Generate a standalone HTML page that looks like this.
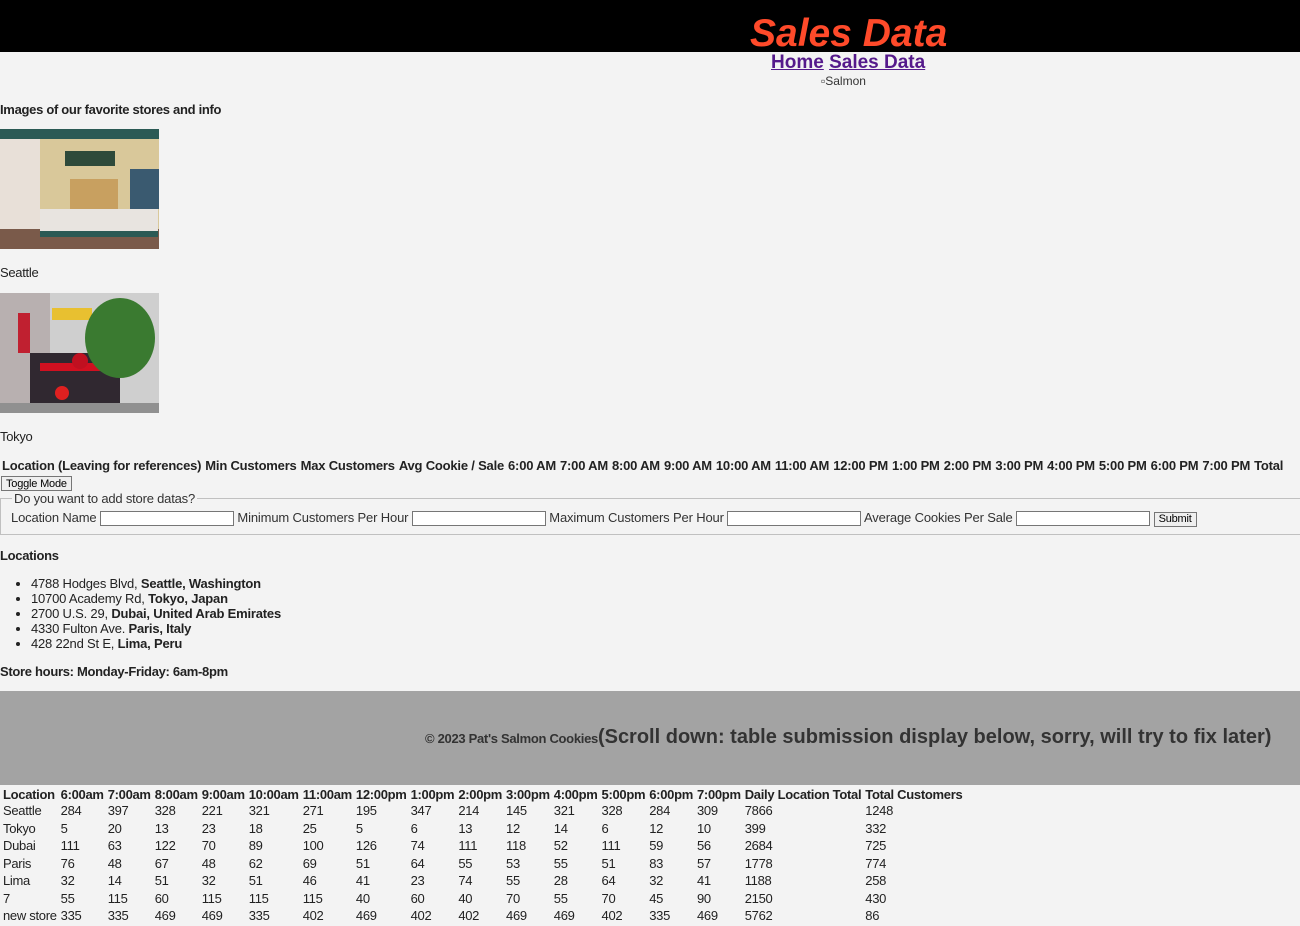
<!DOCTYPE html>
<html><head><meta charset="utf-8"><style>
body{margin:0;background:#f3f3f3;font-family:"Liberation Sans",Arial,sans-serif;font-size:13px;letter-spacing:-0.3px;color:#222;width:1300px;height:926px;position:relative;overflow:hidden}
.a{position:absolute}
header{position:absolute;left:0;top:0;width:1300px;height:52px;background:#000}
h1{position:absolute;left:750px;top:12px;margin:0;font-size:39px;letter-spacing:0;font-style:italic;font-weight:bold;color:#ff4a2a;line-height:44px}
table{border-collapse:separate;border-spacing:2px 0;font-size:13px}
th,td{padding:0 1px;text-align:left;white-space:nowrap}
td{height:17.5px}
.foot{left:0;top:691px;width:1300px;height:94px;background:#a3a3a3}
input{width:130px;height:11px;border:1px solid #767676;padding:1px;vertical-align:middle;background:#fff}
button{font-size:11px;font-family:inherit;padding:0 4px;border:1px solid #767676;background:#efefef;height:15px;line-height:12px;letter-spacing:-0.2px}
ul{margin:0;padding-left:31px}
</style></head><body>
<header><h1>Sales Data</h1></header>
<div class="a" style="left:771px;top:52px;font-size:19px;font-weight:bold;letter-spacing:0"><a href="#" style="color:#551a8b">Home</a> <a href="#" style="color:#551a8b">Sales Data</a></div>
<div class="a" style="left:821px;top:74px;font-size:12px;color:#333;letter-spacing:0">▫Salmon</div>
<div class="a" style="left:0;top:102px;font-weight:bold">Images of our favorite stores and info</div>
<svg class="a" style="left:0;top:129px" width="159" height="120"><rect width="159" height="120" fill="#d9c89a"/><rect width="159" height="10" fill="#2b5a55"/><rect x="0" y="10" width="40" height="100" fill="#e8e0d8"/><rect x="65" y="22" width="50" height="15" fill="#2e4a3a"/><rect x="70" y="50" width="48" height="40" fill="#c8a060"/><rect x="0" y="100" width="159" height="20" fill="#7a5a4a"/><rect x="40" y="80" width="118" height="25" fill="#e8e4e0"/><rect x="40" y="102" width="118" height="6" fill="#2b5a55"/><rect x="130" y="40" width="29" height="40" fill="#3a5a70"/></svg>
<div class="a" style="left:0;top:265px">Seattle</div>
<svg class="a" style="left:0;top:293px" width="159" height="120"><rect width="159" height="120" fill="#cfcfcf"/><rect x="0" y="0" width="50" height="110" fill="#b8b0b0"/><rect x="18" y="20" width="12" height="40" fill="#c02030"/><rect x="52" y="15" width="40" height="12" fill="#e8c030"/><rect x="30" y="60" width="90" height="50" fill="#302830"/><rect x="40" y="70" width="80" height="8" fill="#d01020"/><circle cx="80" cy="68" r="8" fill="#c01020"/><ellipse cx="120" cy="45" rx="35" ry="40" fill="#3a7a30"/><rect x="0" y="110" width="159" height="10" fill="#909090"/><circle cx="62" cy="100" r="7" fill="#e02020"/></svg>
<div class="a" style="left:0;top:429px">Tokyo</div>
<table class="a" style="left:-1px;top:458px;font-weight:bold;border-spacing:2px 0;letter-spacing:-0.2px"><tr><th>Location (Leaving for references)</th><th>Min Customers</th><th>Max Customers</th><th>Avg Cookie / Sale</th><th>6:00 AM</th><th>7:00 AM</th><th>8:00 AM</th><th>9:00 AM</th><th>10:00 AM</th><th>11:00 AM</th><th>12:00 PM</th><th>1:00 PM</th><th>2:00 PM</th><th>3:00 PM</th><th>4:00 PM</th><th>5:00 PM</th><th>6:00 PM</th><th>7:00 PM</th><th>Total</th></tr></table>
<button class="a" style="left:1px;top:476px">Toggle Mode</button>
<fieldset class="a" style="left:0;top:491px;width:1300px;margin:0;padding:0;border:1px solid #c0c0c0;border-right:none;box-sizing:border-box;height:44px;letter-spacing:-0.2px">
<legend style="margin-left:11px;padding:0 2px;color:#333">Do you want to add store datas?</legend></fieldset>
<div class="a" style="left:11px;top:510px;color:#333;letter-spacing:-0.15px">Location Name <input> Minimum Customers Per Hour <input> Maximum Customers Per Hour <input> Average Cookies Per Sale <input> <button>Submit</button></div>
<div class="a" style="left:0;top:548px;font-weight:bold">Locations</div>
<div class="a" style="left:0;top:576px;line-height:15px;letter-spacing:-0.2px"><ul>
<li>4788 Hodges Blvd, <b>Seattle, Washington</b></li>
<li>10700 Academy Rd, <b>Tokyo, Japan</b></li>
<li>2700 U.S. 29, <b>Dubai, United Arab Emirates</b></li>
<li>4330 Fulton Ave. <b>Paris, Italy</b></li>
<li>428 22nd St E, <b>Lima, Peru</b></li></ul></div>
<div class="a" style="left:0;top:664px;font-weight:bold">Store hours: Monday-Friday: 6am-8pm</div>
<div class="a foot"></div>
<div class="a" style="left:425px;top:726px;color:#333;font-weight:bold;white-space:nowrap"><span style="font-size:13px">© 2023 Pat's Salmon Cookies</span><span style="font-size:20px;letter-spacing:0">(Scroll down: table submission display below, sorry, will try to fix later)</span></div>
<table class="a" style="left:0;top:787px">
<tr><th>Location</th><th>6:00am</th><th>7:00am</th><th>8:00am</th><th>9:00am</th><th>10:00am</th><th>11:00am</th><th>12:00pm</th><th>1:00pm</th><th>2:00pm</th><th>3:00pm</th><th>4:00pm</th><th>5:00pm</th><th>6:00pm</th><th>7:00pm</th><th>Daily Location Total</th><th>Total Customers</th></tr>
<tr><td>Seattle</td><td>284</td><td>397</td><td>328</td><td>221</td><td>321</td><td>271</td><td>195</td><td>347</td><td>214</td><td>145</td><td>321</td><td>328</td><td>284</td><td>309</td><td>7866</td><td>1248</td></tr>
<tr><td>Tokyo</td><td>5</td><td>20</td><td>13</td><td>23</td><td>18</td><td>25</td><td>5</td><td>6</td><td>13</td><td>12</td><td>14</td><td>6</td><td>12</td><td>10</td><td>399</td><td>332</td></tr>
<tr><td>Dubai</td><td>111</td><td>63</td><td>122</td><td>70</td><td>89</td><td>100</td><td>126</td><td>74</td><td>111</td><td>118</td><td>52</td><td>111</td><td>59</td><td>56</td><td>2684</td><td>725</td></tr>
<tr><td>Paris</td><td>76</td><td>48</td><td>67</td><td>48</td><td>62</td><td>69</td><td>51</td><td>64</td><td>55</td><td>53</td><td>55</td><td>51</td><td>83</td><td>57</td><td>1778</td><td>774</td></tr>
<tr><td>Lima</td><td>32</td><td>14</td><td>51</td><td>32</td><td>51</td><td>46</td><td>41</td><td>23</td><td>74</td><td>55</td><td>28</td><td>64</td><td>32</td><td>41</td><td>1188</td><td>258</td></tr>
<tr><td>7</td><td>55</td><td>115</td><td>60</td><td>115</td><td>115</td><td>115</td><td>40</td><td>60</td><td>40</td><td>70</td><td>55</td><td>70</td><td>45</td><td>90</td><td>2150</td><td>430</td></tr>
<tr><td>new store</td><td>335</td><td>335</td><td>469</td><td>469</td><td>335</td><td>402</td><td>469</td><td>402</td><td>402</td><td>469</td><td>469</td><td>402</td><td>335</td><td>469</td><td>5762</td><td>86</td></tr>
</table>
</body></html>
